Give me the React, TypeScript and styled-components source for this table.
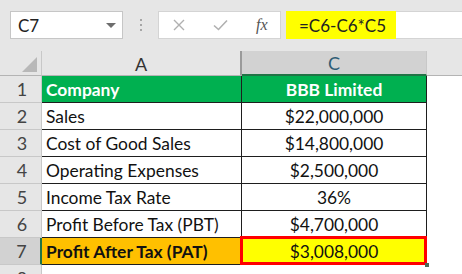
import React from "react";
import styled, { createGlobalStyle } from "styled-components";

const GlobalStyle = createGlobalStyle`
  html, body { margin: 0; padding: 0; background: #ffffff; }
  #root { width: 462px; height: 274px; overflow: hidden; }
`;

const FONT = `Lato, "Liberation Sans", sans-serif`;

const Frame = styled.div`
  width: 462px;
  height: 274px;
  overflow: hidden;
  background: #ffffff;
  font-family: ${FONT};
`;

const TopBar = styled.div`
  height: 51px;
  box-sizing: border-box;
  background: #e6e6e6;
  display: flex;
  align-items: flex-start;
  padding: 11px 0 0 10px;
`;

const NameBox = styled.div`
  width: 113px;
  height: 28px;
  box-sizing: border-box;
  background: #fff;
  border: 1px solid #c6c6c6;
  display: flex;
  align-items: center;
  justify-content: space-between;
  padding: 0 6px 0 7px;
  font-size: 17px;
  color: #222;
`;

const Caret = styled.span`
  width: 0;
  height: 0;
  border-left: 5px solid transparent;
  border-right: 5px solid transparent;
  border-top: 5px solid #6d6d6d;
`;

const Dots = styled.div`
  width: 35px;
  height: 28px;
  display: flex;
  flex-direction: column;
  align-items: center;
  justify-content: center;
  gap: 3px;
`;

const Dot = styled.span`
  width: 2px;
  height: 2px;
  background: #a6a6a6;
`;

const ButtonBox = styled.div`
  width: 123px;
  height: 28px;
  box-sizing: border-box;
  background: #fff;
  border: 1px solid #d4d4d4;
  display: flex;
  align-items: center;
  padding-left: 14px;
  gap: 28px;
`;

const Fx = styled.span`
  font-family: "Liberation Serif", serif;
  font-style: italic;
  font-size: 16px;
  color: #555;
`;

const FormulaBox = styled.div`
  flex: 1;
  margin-left: 5px;
  height: 28px;
  box-sizing: border-box;
  background: #fff;
  border-top: 1px solid #d4d4d4;
  border-bottom: 1px solid #d4d4d4;
  display: flex;
`;

const FormulaText = styled.div`
  width: 110px;
  height: 28px;
  margin-top: -1px;
  background: #ffff00;
  display: flex;
  align-items: center;
  padding-left: 13px;
  box-sizing: border-box;
  font-size: 17px;
  color: #222;
`;

const Grid = styled.div`
  display: grid;
  grid-template-columns: 42px 200px 185px 35px;
  grid-template-rows: 25px repeat(7, 27px) 27px;
`;

const Corner = styled.div`
  background: #e6e6e6;
  border-right: 1px solid #c8c8c8;
  border-bottom: 1px solid #b4b4b4;
  box-sizing: border-box;
  position: relative;
`;

const Triangle = styled.div`
  position: absolute;
  right: 4px;
  bottom: 3px;
  width: 0;
  height: 0;
  border-left: 15px solid transparent;
  border-bottom: 15px solid #b8b8b8;
`;

const ColHead = styled.div<{ $sel?: boolean; $thick?: boolean }>`
  background: ${(p) => (p.$sel ? "#d2d2d2" : "#e6e6e6")};
  border-right: ${(p) => (p.$thick ? "2px solid #9a9a9a" : "1px solid #c8c8c8")};
  border-bottom: ${(p) => (p.$sel ? "2px solid #217346" : "1px solid #b4b4b4")};
  box-sizing: border-box;
  display: flex;
  align-items: center;
  justify-content: center;
  font-size: 18px;
  color: ${(p) => (p.$sel ? "#2e5d75" : "#333")};
  padding-top: 1px;
`;

const RowHead = styled.div<{ $sel?: boolean }>`
  background: ${(p) => (p.$sel ? "#d2d2d2" : "#e6e6e6")};
  border-right: ${(p) => (p.$sel ? "2px solid #217346" : "1px solid #c8c8c8")};
  border-bottom: 1px solid #c8c8c8;
  box-sizing: border-box;
  display: flex;
  align-items: center;
  justify-content: center;
  font-size: 18px;
  color: #444;
  padding-left: 3px;
`;

type Tone = "plain" | "green" | "orange" | "yellow";

const toneBg: Record<Tone, string> = {
  plain: "#ffffff",
  green: "#00b050",
  orange: "#ffc000",
  yellow: "#ffff00",
};

const Cell = styled.div<{ $tone: Tone; $center?: boolean; $bold?: boolean }>`
  background: ${(p) => toneBg[p.$tone]};
  border-right: 1px solid #1e1e1e;
  border-bottom: 1px solid #1e1e1e;
  box-sizing: border-box;
  display: flex;
  align-items: center;
  justify-content: ${(p) => (p.$center ? "center" : "flex-start")};
  padding-left: ${(p) => (p.$center ? "0" : "4px")};
  font-size: 17.4px;
  font-weight: ${(p) => (p.$bold ? 700 : 400)};
  color: ${(p) => (p.$tone === "green" ? "#ffffff" : "#111")};
  white-space: nowrap;
  position: relative;
`;

const Selection = styled.div`
  position: absolute;
  left: -2px;
  top: -2px;
  right: -1px;
  bottom: -1px;
  border: 3px solid #ff0000;
  pointer-events: none;
`;

const Handle = styled.div`
  position: absolute;
  right: -3px;
  bottom: -3px;
  width: 4px;
  height: 4px;
  background: #4a6b57;
`;

const Blank = styled.div<{ $head?: boolean }>`
  background: ${(p) => (p.$head ? "#e6e6e6" : "#ffffff")};
  border-bottom: ${(p) => (p.$head ? "1px solid #b4b4b4" : "none")};
  box-sizing: border-box;
`;

const rows = [
  { label: "Sales", value: "$22,000,000" },
  { label: "Cost of Good Sales", value: "$14,800,000" },
  { label: "Operating Expenses", value: "$2,500,000" },
  { label: "Income Tax Rate", value: "36%" },
  { label: "Profit Before Tax (PBT)", value: "$4,700,000" },
];

export default function App() {
  return (
    <>
      <GlobalStyle />
      <Frame>
        <TopBar>
          <NameBox>
            <span>C7</span>
            <Caret />
          </NameBox>
          <Dots>
            <Dot />
            <Dot />
            <Dot />
          </Dots>
          <ButtonBox>
            <svg width="12" height="12" viewBox="0 0 12 12">
              <path d="M1 1 L11 11 M11 1 L1 11" stroke="#b0b0b0" strokeWidth="1.4" fill="none" />
            </svg>
            <svg width="15" height="12" viewBox="0 0 15 12">
              <path d="M1 6.5 L5.5 10.5 L14 1.5" stroke="#b0b0b0" strokeWidth="1.6" fill="none" />
            </svg>
            <Fx>fx</Fx>
          </ButtonBox>
          <FormulaBox>
            <FormulaText>=C6-C6*C5</FormulaText>
          </FormulaBox>
        </TopBar>
        <Grid>
          <Corner>
            <Triangle />
          </Corner>
          <ColHead $thick>A</ColHead>
          <ColHead $sel>C</ColHead>
          <Blank $head />

          <RowHead>1</RowHead>
          <Cell $tone="green" $bold>Company</Cell>
          <Cell $tone="green" $bold $center>BBB Limited</Cell>
          <Blank />

          {rows.map((r, i) => (
            <React.Fragment key={r.label}>
              <RowHead>{i + 2}</RowHead>
              <Cell $tone="plain">{r.label}</Cell>
              <Cell $tone="plain" $center>{r.value}</Cell>
              <Blank />
            </React.Fragment>
          ))}

          <RowHead $sel>7</RowHead>
          <Cell $tone="orange" $bold>Profit After Tax (PAT)</Cell>
          <Cell $tone="yellow" $center>
            $3,008,000
            <Selection />
            <Handle />
          </Cell>
          <Blank />

          <RowHead>8</RowHead>
          <Blank />
          <Blank />
          <Blank />
        </Grid>
      </Frame>
    </>
  );
}
